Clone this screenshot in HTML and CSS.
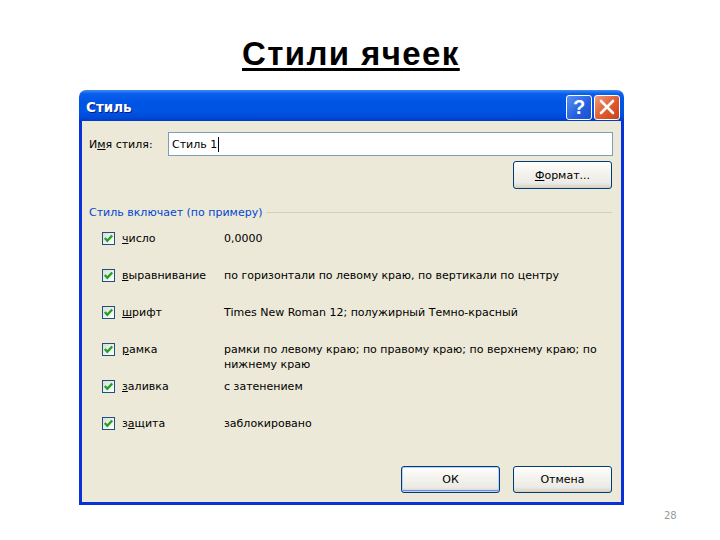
FILE: index.html
```html
<!DOCTYPE html>
<html lang="ru">
<head>
<meta charset="utf-8">
<link rel="stylesheet" href="styles.css">
</head>
<body>
<div class="page">
  <h1 class="heading">Стили ячеек</h1>
  <div class="dialog">
    <div class="titlebar">
      <span class="title">Стиль</span>
      <span class="tb-btn help">?</span>
      <span class="tb-btn close">
        <svg width="18" height="18" viewBox="0 0 18 18"><path d="M3 3 L15 15 M15 3 L3 15" stroke="#fff" stroke-width="2.6" stroke-linecap="round"/></svg>
      </span>
    </div>
    <div class="body">
      <div class="name-row">
        <span class="name-label">И<u>м</u>я стиля:</span>
        <div class="input">Стиль 1<span class="caret"></span></div>
      </div>
      <div class="format-row">
        <div class="btn"><u>Ф</u>ормат...</div>
      </div>
      <div class="group-head">
        <span class="group-title">Стиль включает (по примеру)</span>
        <span class="group-line"></span>
      </div>
      <div class="rows">
        <div class="row">
          <span class="cb"><svg width="11" height="11" viewBox="0 0 11 11"><path d="M1.8 5 L4.3 7.8 L9.2 2.4" fill="none" stroke="#21A121" stroke-width="2.3"/></svg></span>
          <span class="row-label"><u>ч</u>исло</span>
          <span class="row-value">0,0000</span>
        </div>
        <div class="row">
          <span class="cb"><svg width="11" height="11" viewBox="0 0 11 11"><path d="M1.8 5 L4.3 7.8 L9.2 2.4" fill="none" stroke="#21A121" stroke-width="2.3"/></svg></span>
          <span class="row-label"><u>в</u>ыравнивание</span>
          <span class="row-value">по горизонтали по левому краю, по вертикали по центру</span>
        </div>
        <div class="row">
          <span class="cb"><svg width="11" height="11" viewBox="0 0 11 11"><path d="M1.8 5 L4.3 7.8 L9.2 2.4" fill="none" stroke="#21A121" stroke-width="2.3"/></svg></span>
          <span class="row-label"><u>ш</u>рифт</span>
          <span class="row-value">Times New Roman 12; полужирный Темно-красный</span>
        </div>
        <div class="row">
          <span class="cb"><svg width="11" height="11" viewBox="0 0 11 11"><path d="M1.8 5 L4.3 7.8 L9.2 2.4" fill="none" stroke="#21A121" stroke-width="2.3"/></svg></span>
          <span class="row-label"><u>р</u>амка</span>
          <span class="row-value">рамки по левому краю; по правому краю; по верхнему краю; по нижнему краю</span>
        </div>
        <div class="row">
          <span class="cb"><svg width="11" height="11" viewBox="0 0 11 11"><path d="M1.8 5 L4.3 7.8 L9.2 2.4" fill="none" stroke="#21A121" stroke-width="2.3"/></svg></span>
          <span class="row-label"><u>з</u>аливка</span>
          <span class="row-value">с затенением</span>
        </div>
        <div class="row">
          <span class="cb"><svg width="11" height="11" viewBox="0 0 11 11"><path d="M1.8 5 L4.3 7.8 L9.2 2.4" fill="none" stroke="#21A121" stroke-width="2.3"/></svg></span>
          <span class="row-label">з<u>а</u>щита</span>
          <span class="row-value">заблокировано</span>
        </div>
      </div>
      <div class="buttons">
        <div class="btn default">ОК</div>
        <div class="btn">Отмена</div>
      </div>
    </div>
  </div>
  <div class="pagenum">28</div>
</div>
</body>
</html>
```
FILE: styles.css
```css
html, body {
  margin: 0;
  padding: 0;
  background: #ffffff;
}
.page {
  width: 720px;
  height: 540px;
  overflow: hidden;
  font-family: "DejaVu Sans", sans-serif;
  font-size: 11px;
  color: #000;
}
.heading {
  margin: 0;
  padding: 36px 0 0 242px;
  height: 54px;
  font: bold 33px/36px "Liberation Sans", Arial, sans-serif;
  letter-spacing: 1.4px;
  text-decoration: underline;
  text-decoration-thickness: 3px;
  text-underline-offset: 3px;
  color: #000;
}
.dialog {
  margin-left: 79px;
  width: 545px;
}
.titlebar {
  height: 31px;
  box-sizing: border-box;
  border-radius: 7px 7px 0 0;
  background: linear-gradient(#3C8CF8 0%, #0A5EEC 12%, #0054E3 40%, #0054E3 70%, #0048D8 90%, #003DC4 100%);
  display: flex;
  align-items: center;
  padding: 3px 4px 0 7px;
}
.title {
  flex: 1;
  color: #fff;
  font: bold 13.5px "DejaVu Sans", sans-serif;
  text-shadow: 1px 1px 0 #0A1883;
}
.tb-btn {
  width: 24px;
  height: 23px;
  border: 1px solid #fff;
  border-radius: 3px;
  display: flex;
  align-items: center;
  justify-content: center;
  margin-left: 2px;
}
.help {
  background: linear-gradient(135deg, #5B8FF0, #2360E0 60%, #1A4FD0);
  color: #fff;
  font: bold 20px "Liberation Sans", sans-serif;
}
.close {
  background: linear-gradient(135deg, #F09A78, #E05A2E 55%, #C8401A);
}
.body {
  box-sizing: border-box;
  background: #ECE9D8;
  border: 3px solid #0831D9;
  border-top: 0;
  height: 384px;
  padding: 11px 8px 0 7px;
}
.name-row {
  display: flex;
  align-items: center;
  height: 24px;
}
.name-label {
  width: 79px;
}
.input {
  flex: 1;
  height: 24px;
  box-sizing: border-box;
  border: 1px solid #7F9DB9;
  background: #fff;
  padding-left: 3px;
  display: flex;
  align-items: center;
}
.caret {
  display: inline-block;
  width: 1px;
  height: 15px;
  background: #000;
  margin-left: 1px;
}
.format-row {
  display: flex;
  justify-content: flex-end;
  margin-top: 5px;
  padding-right: 1px;
}
.btn {
  width: 99px;
  height: 27px;
  box-sizing: border-box;
  border: 1px solid #003C74;
  border-radius: 3px;
  background: linear-gradient(#FFFFFF 0%, #F4F3EE 40%, #ECEBE6 80%, #D6D0C5 100%);
  display: flex;
  align-items: center;
  justify-content: center;
}
.format-row .btn {
  height: 28px;
}
.btn.default {
  box-shadow: inset 0 0 0 1px #B9D1FA, inset 0 -1px 0 1px #6E8FE0;
}
.group-head {
  display: flex;
  align-items: center;
  margin-top: 16px;
  line-height: 15px;
  padding-right: 1px;
}
.group-title {
  color: #0046D5;
  margin-right: 4px;
}
.group-line {
  flex: 1;
  border-top: 1px solid #D0D0BF;
}
.rows {
  margin-top: 11px;
  padding-left: 13px;
}
.row {
  display: flex;
  align-items: flex-start;
  height: 37px;
  line-height: 15px;
}
.cb {
  width: 13px;
  height: 13px;
  box-sizing: border-box;
  border: 1px solid #1C5180;
  background: linear-gradient(135deg, #DCDCD7, #FFFFFF);
  margin-top: 1px;
  margin-right: 7px;
  display: flex;
  align-items: center;
  justify-content: center;
}
.row-label {
  width: 102px;
}
.row-value {
  flex: 1;
  padding-right: 4px;
}
.buttons {
  display: flex;
  justify-content: flex-end;
  gap: 13px;
  margin-top: 13px;
  padding-right: 1px;
}
.pagenum {
  margin: 5px 0 0 664px;
  font: 10px "DejaVu Sans", sans-serif;
  color: #9A9A9A;
}
```
